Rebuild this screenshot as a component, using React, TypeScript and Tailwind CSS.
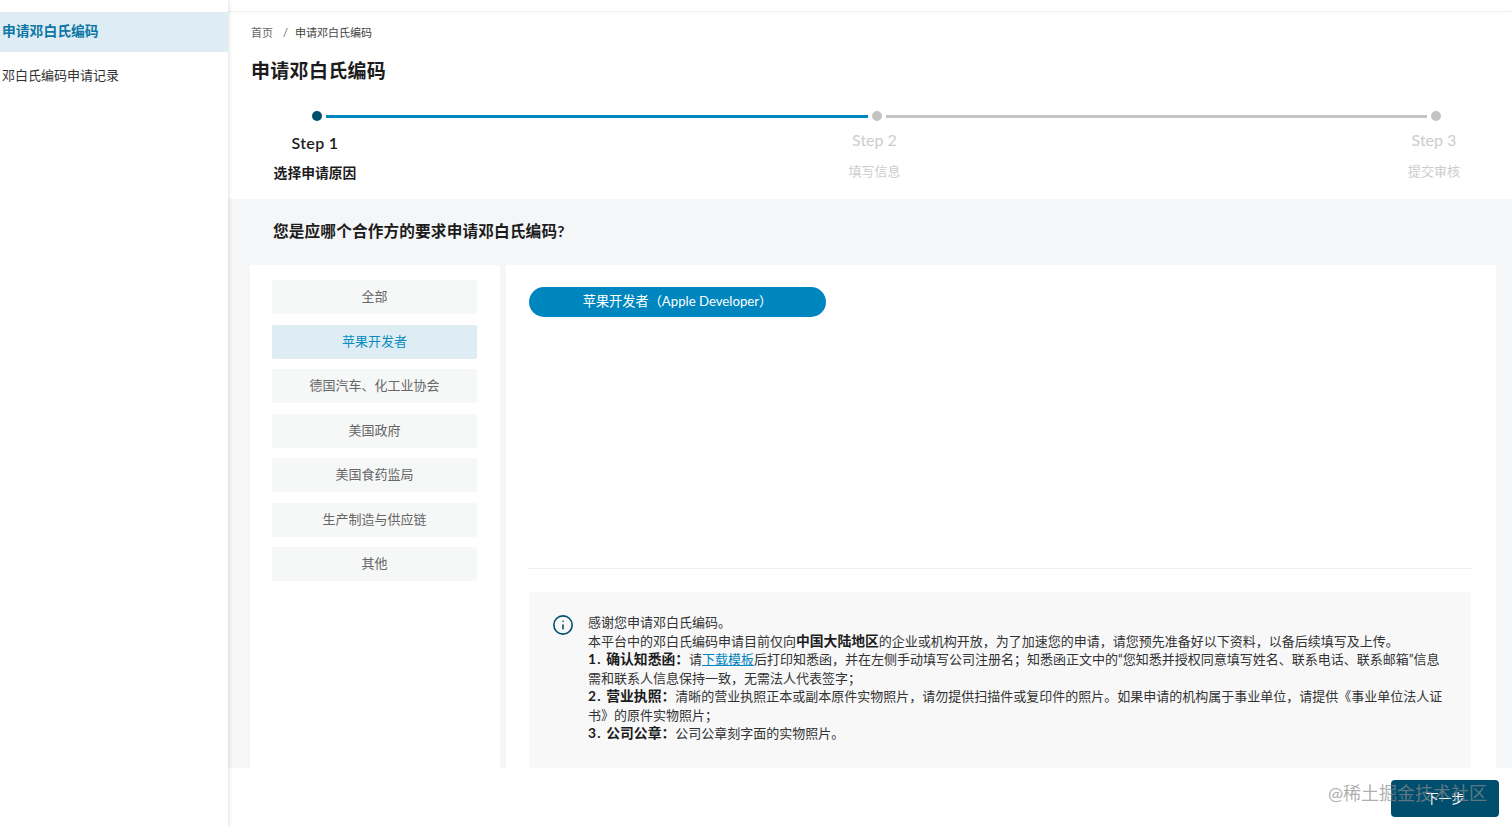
import { Info } from 'lucide-react';

const CATEGORIES = ['全部', '苹果开发者', '德国汽车、化工业协会', '美国政府', '美国食药监局', '生产制造与供应链', '其他'];

const STEPS = [
    { title: 'Step 1', desc: '选择申请原因', active: true },
    { title: 'Step 2', desc: '填写信息', active: false },
    { title: 'Step 3', desc: '提交审核', active: false },
];

function Stepper() {
    return (
        <div className="mt-[26px]">
            <div className="flex items-center gap-[4px] ml-[84px] mr-[71px] h-[10px]">
                <span className="w-[10px] h-[10px] rounded-full bg-[#004e6e] shrink-0" />
                <span className="flex-1 h-[3px] bg-[#0086bf]" />
                <span className="w-[10px] h-[10px] rounded-full bg-[#c4c4c4] shrink-0" />
                <span className="flex-1 h-[3px] bg-[#c4c4c4]" />
                <span className="w-[10px] h-[10px] rounded-full bg-[#c4c4c4] shrink-0" />
            </div>
            <div className="flex justify-between pl-[37px] pr-[28px] mt-[8px]">
                {STEPS.map((s) => (
                    <div key={s.title} className="w-[100px] flex flex-col items-center">
                        {s.active ? (
                            <>
                                <span className="text-[16px] leading-[24px] mt-[2px] font-semibold tracking-[0.3px] text-[#1c1c1c]">{s.title}</span>
                                <span className="text-[13.8px] leading-[20px] mt-[8px] font-bold text-[#1c1c1c]">{s.desc}</span>
                            </>
                        ) : (
                            <>
                                <span className="text-[16px] leading-[24px] -mt-[1px] text-[#cdcdcd]">{s.title}</span>
                                <span className="text-[13px] leading-[20px] mt-[9px] text-[#cdcdcd]">{s.desc}</span>
                            </>
                        )}
                    </div>
                ))}
            </div>
        </div>
    );
}

function Lead({ num, label }: { num: string; label: string }) {
    return (
        <b className="text-[13.8px] text-[#1c1c1c]">
            <span className="tracking-[1.2px]">{num} </span>
            {label}：
        </b>
    );
}

export default function App() {
    return (
        <div className="relative flex w-[1512px] h-[827px] overflow-hidden bg-white font-['Lato','Noto_Sans_CJK_SC',sans-serif] text-[#1c1c1c]">
            {/* sidebar */}
            <aside className="w-[228px] shrink-0 pt-[12px] shadow-[1px_0_4px_rgba(0,0,0,0.12)] z-10 bg-white">
                <div className="h-[40px] flex items-center pl-[2px] pb-[1px] bg-[#deedf3] text-[13.8px] font-bold text-[#0c77a6]">申请邓白氏编码</div>
                <div className="h-[48px] flex items-center pl-[2px] text-[13px] text-[#333]">邓白氏编码申请记录</div>
            </aside>

            <main className="flex-1 flex flex-col min-w-0">
                <div className="h-[12px] shrink-0 border-b border-[#f0f0f0] shadow-[0_1px_2px_rgba(0,0,0,0.03)]" />

                <div className="h-[187px] shrink-0">
                    <div className="flex items-center h-[20px] mt-[11px] pl-[23px] text-[11px] text-[#666]">
                        <span>首页</span>
                        <span className="ml-[10px] mr-[7px]">/</span>
                        <span className="text-[#444]">申请邓白氏编码</span>
                    </div>
                    <h1 className="mt-[14px] pl-[23px] text-[19px] leading-[28px] font-bold tracking-[0.3px] text-[#1c1c1c]">申请邓白氏编码</h1>
                    <Stepper />
                </div>

                <div className="flex-1 min-h-0 flex flex-col bg-[#f4f6f7] pl-[22px] pr-[16px] overflow-hidden">
                    <h2 className="h-[66px] shrink-0 flex items-center pl-[23px] text-[15.7px] font-bold tracking-[0.1px] text-[#1c1c1c]">您是应哪个合作方的要求申请邓白氏编码?</h2>
                    <div className="flex-1 min-h-0 flex gap-[6px]">
                        <div className="w-[250px] shrink-0 bg-white px-[22px] pt-[15px] flex flex-col gap-[10.5px]">
                            {CATEGORIES.map((c, i) => (
                                <div
                                    key={c}
                                    className={`h-[34px] w-[205px] flex items-center justify-center text-[13px] rounded-[2px] ${i === 1 ? 'bg-[#deedf3] text-[#0a8cc0]' : 'bg-[#f6f7f7] text-[#666]'}`}
                                >
                                    {c}
                                </div>
                            ))}
                        </div>
                        <div className="flex-1 min-w-0 bg-white pl-[23px] pr-[25px] pt-[22px] overflow-hidden">
                            <div className="w-[297px] h-[30px] rounded-full bg-[#0086bf] text-white text-[13.2px] flex items-center justify-center">苹果开发者（Apple Developer）</div>
                            <div className="mt-[251px] border-t border-[#efefef]" />
                            <div className="mt-[23px] bg-[#f8f8f9] flex pl-[23px] pr-[26px] pt-[21px] pb-[30px] rounded-[2px]">
                                <Info className="w-[22px] h-[22px] mt-[1px] text-[#004e6e] shrink-0" strokeWidth={1.75} />
                                <p className="ml-[14px] text-[13px] leading-[18.5px] text-[#333]">
                                    感谢您申请邓白氏编码。<br />
                                    本平台中的邓白氏编码申请目前仅向<b className="text-[13.8px] text-[#1c1c1c]">中国大陆地区</b>的企业或机构开放，为了加速您的申请，请您预先准备好以下资料，以备后续填写及上传。<br />
                                    <Lead num="1." label="确认知悉函" />请<span className="text-[#0086bf] underline">下载模板</span>后打印知悉函，并在左侧手动填写公司注册名；知悉函正文中的“您知悉并授权同意填写姓名、联系电话、联系邮箱”信息需和联系人信息保持一致，无需法人代表签字；<br />
                                    <Lead num="2." label="营业执照" />清晰的营业执照正本或副本原件实物照片，请勿提供扫描件或复印件的照片。如果申请的机构属于事业单位，请提供《事业单位法人证书》的原件实物照片；<br />
                                    <Lead num="3." label="公司公章" />公司公章刻字面的实物照片。
                                </p>
                            </div>
                        </div>
                    </div>
                </div>

                <div className="h-[59px] shrink-0 flex justify-end pt-[12px] pr-[13px] bg-white">
                    <button className="w-[108px] h-[37px] rounded-[4px] bg-[#004e6e] text-white text-[13px]">下一步</button>
                </div>
            </main>

            {/* watermark */}
            <span className="absolute left-[1328px] top-[780px] text-[18px] leading-[26px] text-[#8a8a8a]/70 z-20">@稀土掘金技术社区</span>
        </div>
    );
}
